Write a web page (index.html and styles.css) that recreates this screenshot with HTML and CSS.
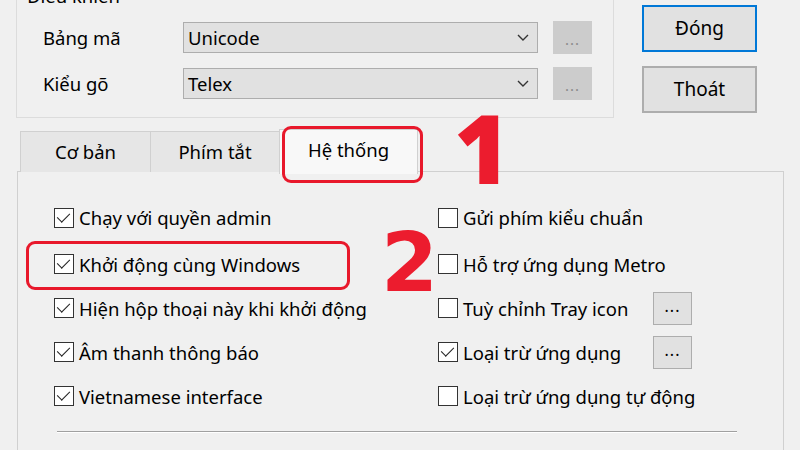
FILE: index.html
```html
<!DOCTYPE html>
<html lang="vi">
 <head>
  <meta charset="utf-8">
  <title>Unikey - Hệ thống</title>
  <link rel="stylesheet" href="styles.css">
 </head>
 <body>
  <div id="wrap">
	<div id="top">
		<div id="group">
			<div class="legend">Điều khiển</div>
			<div class="row">
				<span class="lbl">Bảng mã</span>
				<div class="combo">Unicode<svg class="arrow" width="12" height="8" viewBox="0 0 12 8"><polyline points="1,1 6,6 11,1" fill="none" stroke="#333" stroke-width="1.4"/></svg></div>
				<div class="more off">...</div>
			</div>
			<div class="row">
				<span class="lbl">Kiểu gõ</span>
				<div class="combo">Telex<svg class="arrow" width="12" height="8" viewBox="0 0 12 8"><polyline points="1,1 6,6 11,1" fill="none" stroke="#333" stroke-width="1.4"/></svg></div>
				<div class="more off">...</div>
			</div>
		</div>
		<div id="side">
			<div class="btn focus">Đóng</div>
			<div class="btn">Thoát</div>
		</div>
	</div>
	<div id="tabs">
		<div class="tab">Cơ bản</div>
		<div class="tab">Phím tắt</div>
		<div class="tab on">Hệ thống</div>
	</div>
	<div id="panel">
		<div class="opts">
			<div class="opt"><span class="chk on"></span>Chạy với quyền admin</div>
			<div class="opt"><span class="chk"></span>Gửi phím kiểu chuẩn</div>
			<div class="opt"><span class="chk on"></span>Khởi động cùng Windows</div>
			<div class="opt"><span class="chk"></span>Hỗ trợ ứng dụng Metro</div>
			<div class="opt"><span class="chk on"></span>Hiện hộp thoại này khi khởi động</div>
			<div class="opt"><span class="chk"></span>Tuỳ chỉnh Tray icon<div class="more">...</div></div>
			<div class="opt"><span class="chk on"></span>Âm thanh thông báo</div>
			<div class="opt"><span class="chk on"></span>Loại trừ ứng dụng<div class="more">...</div></div>
			<div class="opt"><span class="chk on"></span>Vietnamese interface</div>
			<div class="opt"><span class="chk"></span>Loại trừ ứng dụng tự động</div>
		</div>
		<div class="sep"></div>
	</div>
	<div class="mark box1"></div>
	<div class="mark box2"></div>
	<div class="num n1">1</div>
	<div class="num n2">2</div>
  </div>
 </body>
</html>
```

FILE: styles.css
```css
*{margin:0;padding:0;box-sizing:border-box;}
body{
	background:#f0f0f0;
	font-family:"Noto Sans","Open Sans",sans-serif;
	font-size:18.5px;
	color:#000;
	overflow:hidden;
}
#wrap{
	width:800px;
	height:450px;
	position:relative;
	overflow:hidden;
}
#top{
	display:flex;
	align-items:flex-start;
}
#group{
	width:598px;
	height:124px;
	margin:-6px 0 0 16px;
	border:1px solid #dcdcdc;
	padding:27px 0 0 26px;
	position:relative;
}
#group .legend{
	position:absolute;
	top:-11px;
	left:7px;
	padding:0 3px;
	background:#f0f0f0;
	line-height:24px;
}
.row{
	display:flex;
	align-items:center;
	height:31px;
	margin-bottom:15px;
}
.lbl{
	width:140px;
}
.combo{
	width:355px;
	height:31px;
	background:#e1e1e1;
	border:1px solid #adadad;
	padding-left:4px;
	line-height:28px;
	display:flex;
	justify-content:space-between;
	align-items:center;
	padding-right:8px;
}
.more{
	width:39px;
	height:33px;
	background:#e1e1e1;
	border:1px solid #adadad;
	text-align:center;
	line-height:26px;
	font-size:16px;
	letter-spacing:1px;
}
.more.off{
	margin-left:15px;
	background:#cccccc;
	border-color:#cccccc;
	color:#8a8a8a;
	line-height:34px;
	font-size:15px;
}
#side{
	margin:5px 0 0 28px;
	display:flex;
	flex-direction:column;
	gap:14px;
}
.btn{
	width:115px;
	height:47px;
	background:#e1e1e1;
	border:2px solid #adadad;
	text-align:center;
	line-height:43px;
	font-size:19px;
}
.btn.focus{
	border-color:#0078d7;
}
#tabs{
	display:flex;
	align-items:flex-end;
	margin:12px 0 0 20px;
	height:42px;
	position:relative;
	z-index:1;
}
.tab{
	width:130px;
	height:41px;
	background:#e6e6e6;
	border:1px solid #d0d0d0;
	border-bottom:none;
	border-right:none;
	text-align:center;
	line-height:40px;
}
.tab:nth-child(2){
	width:129px;
}
.tab.on{
	width:139px;
	height:45px;
	background:#f8f8f8;
	border-right:1px solid #d0d0d0;
	line-height:40px;
	margin-bottom:-2px;
}
#panel{
	margin:-1px 0 0 17px;
	width:767px;
	height:300px;
	border:1px solid #d0d0d0;
	border-bottom:none;
	padding:21px 0 0 36px;
}
.opts{
	display:grid;
	grid-template-columns:384px 300px;
	grid-template-rows:49px 44px 44px 44px 44px;
}
.opt{
	display:flex;
	align-items:center;
}
.opt .more{
	margin-left:auto;
	margin-right:46px;
}
.chk{
	width:20px;
	height:20px;
	border:1px solid #333;
	background:#fff;
	margin-right:5px;
	flex:none;
	position:relative;
}
.chk.on::after{
	content:"";
	position:absolute;
	left:5px;
	top:1px;
	width:6px;
	height:11px;
	border-right:1.5px solid #222;
	border-bottom:1.5px solid #222;
	transform:rotate(45deg);
}
.sep{
	width:680px;
	height:2px;
	margin:13px 0 0 3px;
	border-top:1px solid #a0a0a0;
	border-bottom:1px solid #fff;
}
.mark{
	position:absolute;
	border:3px solid #e8182b;
	border-radius:9px;
}
.box1{
	left:282px;
	top:126px;
	width:141px;
	height:57px;
	z-index:2;
}
.box2{
	left:26px;
	top:241px;
	width:324px;
	height:49px;
}
.num{
	position:absolute;
	color:#ec1c2e;
	font-family:"DejaVu Sans",sans-serif;
	font-weight:bold;
	line-height:1;
}
.n1{
	left:454px;
	top:99px;
	font-family:"Noto Sans",sans-serif;
	font-weight:900;
	font-size:96px;
}
.n2{
	left:381px;
	top:222px;
	font-size:82px;
}
```
